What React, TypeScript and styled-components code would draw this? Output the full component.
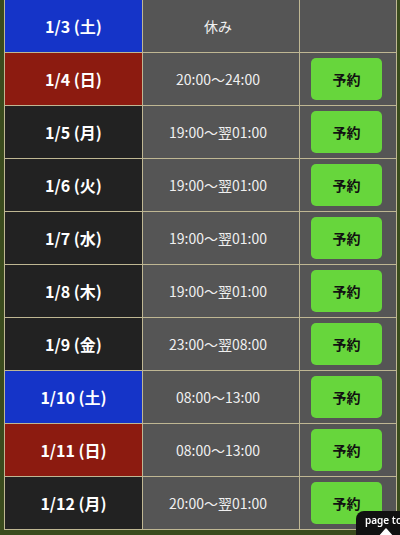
import React from "react";
import styled, { createGlobalStyle } from "styled-components";

const Global = createGlobalStyle`
  html, body { margin: 0; padding: 0; }
  body {
    background: #3a4b1d;
    font-family: "Noto Sans CJK JP", "Noto Sans", sans-serif;
    overflow: hidden;
  }
`;

const Page = styled.div`
  width: 400px;
  height: 535px;
  padding-left: 4px;
  box-sizing: border-box;
  overflow: hidden;
`;

const Table = styled.table`
  border-collapse: collapse;
  width: 393px;
  margin-top: -1px;
  table-layout: fixed;
`;

type Tone = "sat" | "sun" | "plain";

const DateCell = styled.td<{ $tone: Tone }>`
  width: 137px;
  height: 52px;
  padding: 0;
  border: 1px solid #bfb793;
  text-align: center;
  color: #ffffff;
  font-weight: 700;
  font-size: 16px;
  background: ${(p) =>
    p.$tone === "sat" ? "#1534c8" : p.$tone === "sun" ? "#8c1b10" : "#222222"};
`;

const TimeCell = styled.td`
  width: 156px;
  padding: 0;
  border: 1px solid #bfb793;
  background: #555555;
  color: #f0f0f0;
  text-align: center;
  font-size: 14px;
`;

const TimeText = styled.span`
  display: inline-block;
  margin-right: 6px;
`;

const ActionCell = styled.td`
  padding: 0;
  border: 1px solid #bfb793;
  background: #555555;
  text-align: center;
  vertical-align: middle;
`;

const ReserveButton = styled.button`
  width: 71px;
  height: 42px;
  margin: 0 3px 0 0;
  border: none;
  border-radius: 5px;
  background: #67d63c;
  color: #111111;
  font-family: "Noto Sans CJK JP", sans-serif;
  font-weight: 700;
  font-size: 14px;
  cursor: pointer;
  display: inline-flex;
  align-items: center;
  justify-content: center;
`;

const PageTop = styled.div`
  position: fixed;
  left: 356px;
  top: 511px;
  width: 60px;
  height: 24px;
  background: #111111;
  border-radius: 8px 0 0 0;
  color: #ffffff;
  font-family: "Noto Sans", sans-serif;
  font-size: 10px;
  line-height: 12px;
  font-weight: 600;
  padding: 3px 0 0 9px;
  box-sizing: border-box;
`;

const ArrowIcon = styled.svg`
  position: absolute;
  left: 22px;
  top: 16px;
`;

const rows: { d: string; tone: Tone; t: string; btn: boolean }[] = [
  { d: "1/3 (土)", tone: "sat", t: "休み", btn: false },
  { d: "1/4 (日)", tone: "sun", t: "20:00〜24:00", btn: true },
  { d: "1/5 (月)", tone: "plain", t: "19:00〜翌01:00", btn: true },
  { d: "1/6 (火)", tone: "plain", t: "19:00〜翌01:00", btn: true },
  { d: "1/7 (水)", tone: "plain", t: "19:00〜翌01:00", btn: true },
  { d: "1/8 (木)", tone: "plain", t: "19:00〜翌01:00", btn: true },
  { d: "1/9 (金)", tone: "plain", t: "23:00〜翌08:00", btn: true },
  { d: "1/10 (土)", tone: "sat", t: "08:00〜13:00", btn: true },
  { d: "1/11 (日)", tone: "sun", t: "08:00〜13:00", btn: true },
  { d: "1/12 (月)", tone: "plain", t: "20:00〜翌01:00", btn: true },
];

export default function App() {
  return (
    <>
      <Global />
      <Page>
        <Table>
          <tbody>
            {rows.map((r) => (
              <tr key={r.d}>
                <DateCell $tone={r.tone}>{r.d}</DateCell>
                <TimeCell>
                  <TimeText>{r.t}</TimeText>
                </TimeCell>
                <ActionCell>{r.btn && <ReserveButton>予約</ReserveButton>}</ActionCell>
              </tr>
            ))}
          </tbody>
        </Table>
      </Page>
      <PageTop>
        page top
        <ArrowIcon width="16" height="10" viewBox="0 0 16 10">
          <path d="M1 10 L8 2 L15 10 Z" fill="#ffffff" stroke="#ffffff" strokeWidth="1.5" strokeLinejoin="round" />
        </ArrowIcon>
      </PageTop>
    </>
  );
}
